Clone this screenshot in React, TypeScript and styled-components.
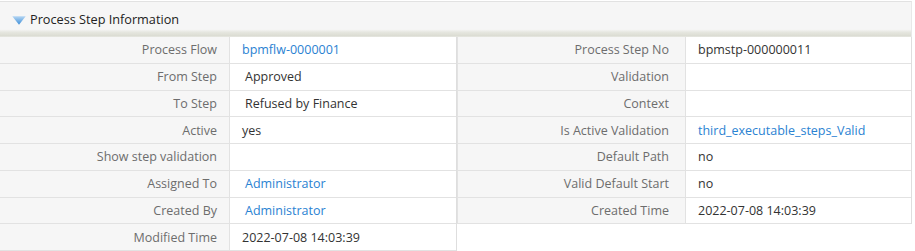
import React from "react";
import styled, { createGlobalStyle } from "styled-components";

const GlobalStyle = createGlobalStyle`
  body {
    margin: 0;
    background: #fff;
    font-family: "Open Sans", "Liberation Sans", sans-serif;
  }
`;

type Field = {
  label: string;
  value?: string;
  link?: boolean;
  indent?: boolean;
};

const leftFields: Field[] = [
  { label: "Process Flow", value: "bpmflw-0000001", link: true },
  { label: "From Step", value: "Approved", indent: true },
  { label: "To Step", value: "Refused by Finance", indent: true },
  { label: "Active", value: "yes" },
  { label: "Show step validation" },
  { label: "Assigned To", value: "Administrator", link: true, indent: true },
  { label: "Created By", value: "Administrator", link: true, indent: true },
  { label: "Modified Time", value: "2022-07-08 14:03:39" },
];

const rightFields: Field[] = [
  { label: "Process Step No", value: "bpmstp-000000011" },
  { label: "Validation" },
  { label: "Context" },
  { label: "Is Active Validation", value: "third_executable_steps_Valid", link: true },
  { label: "Default Path", value: "no" },
  { label: "Valid Default Start", value: "no" },
  { label: "Created Time", value: "2022-07-08 14:03:39" },
];

const Caret = () => (
  <svg width="14" height="9" viewBox="0 0 14 9">
    <defs>
      <linearGradient id="caretFill" x1="0" y1="0" x2="0" y2="1">
        <stop offset="0" stopColor="#b5d6f3" />
        <stop offset="1" stopColor="#3b8dd8" />
      </linearGradient>
    </defs>
    <path d="M0.3 0.3 L13.7 0.3 L7 8.8 Z" fill="url(#caretFill)" />
  </svg>
);

const FieldTable = ({ fields, side }: { fields: Field[]; side: "left" | "right" }) => (
  <Column $side={side}>
    {fields.map((f) => (
      <Row key={f.label} $side={side}>
        <Label $side={side}>{f.label}</Label>
        <Value $link={f.link} $indent={f.indent}>
          {f.value}
        </Value>
      </Row>
    ))}
  </Column>
);

const App = () => {
  return (
    <>
      <GlobalStyle />
      <Panel>
        <Header>
          <Caret />
          <Title>Process Step Information</Title>
        </Header>
        <Body>
          <FieldTable fields={leftFields} side="left" />
          <FieldTable fields={rightFields} side="right" />
        </Body>
      </Panel>
    </>
  );
};

export default App;

const Panel = styled.div`
  width: 912px;
`;

const Header = styled.div`
  display: flex;
  align-items: center;
  gap: 4px;
  height: 36px;
  box-sizing: border-box;
  padding: 0 0 0 12px;
  margin-top: 1px;
  border-top: 1px solid #e2e2e2;
  border-right: 1px solid #e8e8e8;
  background: linear-gradient(
    to bottom,
    #f6f6f6 0,
    #f6f6f6 78%,
    #e6e7e0 86%,
    #dcddd4 96%,
    #e8e8e2 100%
  );

  svg {
    margin-top: 1px;
  }
`;

const Title = styled.span`
  font-size: 12.7px;
  color: #222;
  padding-bottom: 1px;
`;

const Body = styled.div`
  display: flex;
  align-items: flex-start;
`;

const Column = styled.div<{ $side: "left" | "right" }>`
  width: ${(p) => (p.$side === "left" ? "457px" : "455px")};
  box-sizing: border-box;
  border-right: 1px solid #dedede;
  border-left: ${(p) => (p.$side === "right" ? "1px solid #e2e2e2" : "none")};
`;

const Row = styled.div<{ $side: "left" | "right" }>`
  display: grid;
  grid-template-columns: ${(p) => (p.$side === "left" ? "230px" : "228px")} 1fr;
  height: 26.75px;
  box-sizing: border-box;
  border-bottom: 1px solid #e2e2e2;
`;

const Label = styled.div<{ $side: "left" | "right" }>`
  display: flex;
  align-items: center;
  justify-content: flex-end;
  padding-right: ${(p) => (p.$side === "left" ? "12px" : "16px")};
  background: #f6f6f6;
  border-right: 1px solid #e2e2e2;
  font-size: 12.5px;
  color: #6d6d6d;
  white-space: nowrap;
`;

const Value = styled.div<{ $link?: boolean; $indent?: boolean }>`
  display: flex;
  align-items: center;
  padding-left: ${(p) => (p.$indent ? "15px" : "12px")};
  font-size: 12.5px;
  color: ${(p) => (p.$link ? "#2a82d2" : "#333")};
  white-space: nowrap;
`;
